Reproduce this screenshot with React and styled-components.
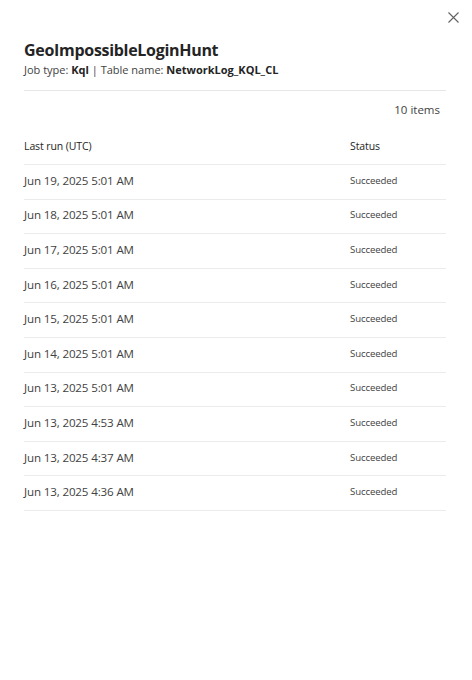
import React from 'react'
import styled, { createGlobalStyle } from 'styled-components'

const Global = createGlobalStyle`
  html, body { margin: 0; padding: 0; background: #fff; }
  body { font-family: "Open Sans", "Noto Sans", sans-serif; color: #323130; }
`

const Panel = styled.div`
  position: relative;
  width: 472px;
  height: 680px;
  box-sizing: border-box;
  padding: 39px 26px 0 24px;
  background: #fff;
`

const Close = styled.button`
  position: absolute;
  top: 11px;
  right: 13px;
  width: 12px;
  height: 12px;
  padding: 0;
  border: 0;
  background: none;
  display: flex;
  align-items: center;
  justify-content: center;
  cursor: pointer;
`

const Title = styled.h1`
  margin: 0;
  font-size: 16px;
  line-height: 22px;
  font-weight: 700;
  color: #242424;
  letter-spacing: -0.3px;
`

const Meta = styled.div`
  margin-top: 1px;
  font-size: 11px;
  line-height: 16px;
  color: #424242;
  b { font-weight: 700; color: #242424; }
`

const Divider = styled.hr`
  margin: 12px 0 0;
  border: 0;
  border-top: 1px solid #e6e6e6;
`

const Count = styled.div`
  margin-top: 11px;
  padding-right: 6px;
  text-align: right;
  font-size: 11.5px;
  line-height: 16px;
  color: #424242;
`

const Table = styled.div`
  margin-top: 11px;
`

const Row = styled.div`
  display: grid;
  grid-template-columns: 326px 1fr;
  align-items: center;
  height: ${p => (p.head ? '36px' : '34.6px')};
  box-sizing: border-box;
  border-bottom: 1px solid #ebebeb;
`

const HeadCell = styled.div`
  font-size: 10.5px;
  color: #242424;
  letter-spacing: -0.1px;
  padding-bottom: 2px;
`

const DateCell = styled.div`
  font-size: 11.6px;
  letter-spacing: -0.15px;
  color: #424242;
  padding-bottom: 3px;
`

const StatusCell = styled.div`
  font-size: 9.6px;
  letter-spacing: -0.1px;
  color: #424242;
  padding-bottom: 3px;
`

const runs = [
  'Jun 19, 2025 5:01 AM',
  'Jun 18, 2025 5:01 AM',
  'Jun 17, 2025 5:01 AM',
  'Jun 16, 2025 5:01 AM',
  'Jun 15, 2025 5:01 AM',
  'Jun 14, 2025 5:01 AM',
  'Jun 13, 2025 5:01 AM',
  'Jun 13, 2025 4:53 AM',
  'Jun 13, 2025 4:37 AM',
  'Jun 13, 2025 4:36 AM',
]

export default function App() {
  return (
    <>
      <Global />
      <Panel>
        <Close aria-label="Close">
          <svg width="11" height="11" viewBox="0 0 11 11">
            <path d="M0.5 0.5L10.5 10.5M10.5 0.5L0.5 10.5" stroke="#616161" strokeWidth="1.1" />
          </svg>
        </Close>
        <Title>GeoImpossibleLoginHunt</Title>
        <Meta>
          Job type: <b>Kql</b> | Table name: <b>NetworkLog_KQL_CL</b>
        </Meta>
        <Divider />
        <Count>10 items</Count>
        <Table>
          <Row head>
            <HeadCell>Last run (UTC)</HeadCell>
            <HeadCell>Status</HeadCell>
          </Row>
          {runs.map((r, i) => (
            <Row key={i}>
              <DateCell>{r}</DateCell>
              <StatusCell>Succeeded</StatusCell>
            </Row>
          ))}
        </Table>
      </Panel>
    </>
  )
}
